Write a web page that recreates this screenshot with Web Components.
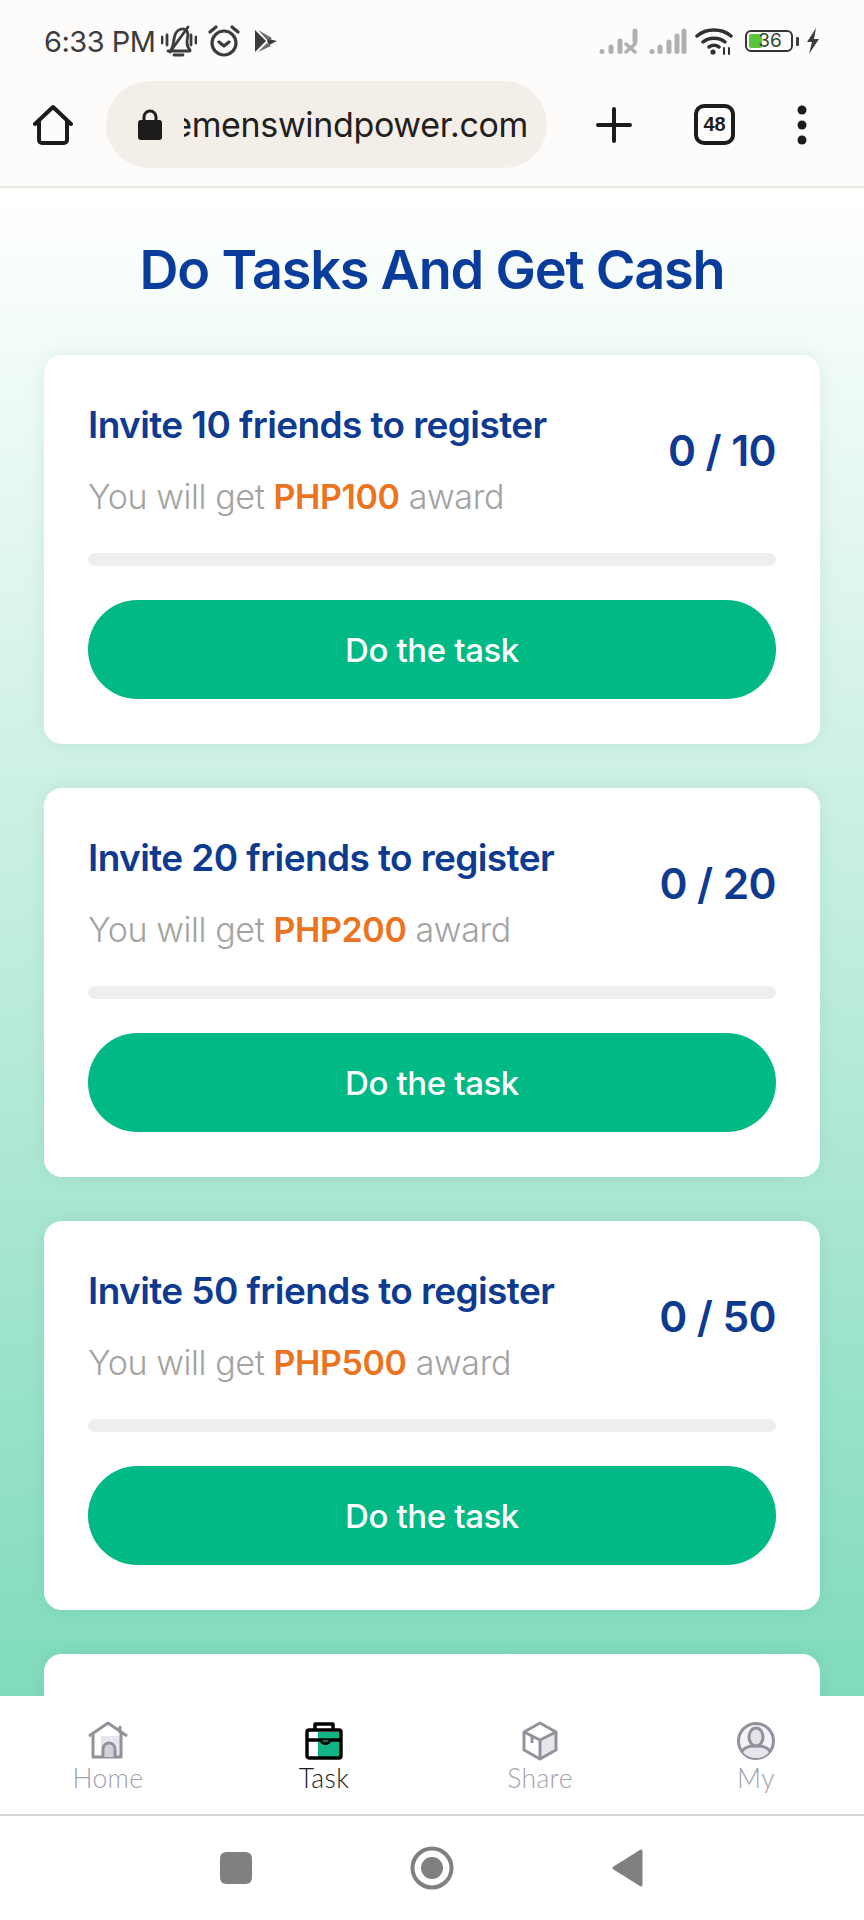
<!DOCTYPE html>
<html lang="en">
<head>
<meta charset="UTF-8">
<title>Do Tasks And Get Cash</title>
<style>
  html, body { height: 1920px; overflow: hidden; }
  body { margin: 0; display: flex; flex-direction: column; font-family: Inter, "Liberation Sans", sans-serif; background: #fff; }
</style>
</head>
<body>
<script>
  const RESET = `* { margin: 0; padding: 0; box-sizing: border-box; } :host { box-sizing: border-box; }`;

  class StatusBar extends HTMLElement {
    constructor() {
      super();
      this.attachShadow({ mode: 'open' });
      this.shadowRoot.innerHTML = `
        <style>
          ${RESET}
          :host { display: flex; align-items: center; height: 75px; padding: 7px 44px 0 44px; background: #fefbfb; color: #3c3c3c; flex: none; }
          .time { font: 400 29px Inter, sans-serif; letter-spacing: -0.5px; }
          svg { display: block; flex: none; }
          .left { display: flex; align-items: center; }
          .right { margin-left: auto; display: flex; align-items: center; }
          .batt { position: relative; width: 48px; height: 22px; border: 2.5px solid #353535; border-radius: 6px; margin-left: 12px; font: 400 19px/17px Inter, sans-serif; text-align: center; padding-left: 2px; overflow: hidden; isolation: isolate; color: #2f4a2c; }
          .batt i { position: absolute; left: 2px; top: 2px; bottom: 2px; width: 13px; background: #5cc43a; border-radius: 2px; z-index: -1; }
        </style>
        <div class="left">
          <span class="time">6:33 PM</span>
          <svg style="margin-left:5px" width="36" height="34" viewBox="0 0 36 34" fill="none" stroke="#3c3c3c" stroke-width="2.800" stroke-linecap="round" stroke-linejoin="round"><path d="M10 26c3-4 2-9 4-15 2-6 9-8 12-4 2 3 0 8 0 11 0 3 1 6 3 8"/><path d="M27 3L9 28M7 27h22M13 31h9"/><path d="M1 13v6M6 11v10M30 11v10M35 13v6"/></svg>
          <svg style="margin-left:10px" width="34" height="32" viewBox="0 0 34 32" fill="none" stroke="#3c3c3c" stroke-width="3.200" stroke-linecap="round" stroke-linejoin="round"><circle cx="17" cy="18" r="12"/><path d="M12 17l5 4 5-4M3 7l6-5M31 7l-6-5"/></svg>
          <svg style="margin-left:13px" width="24" height="24" viewBox="0 0 24 24" fill="#3c3c3c"><path d="M1 1l11 11L1 23z"/><path d="M4 1l14 8-4 3z" opacity=".75"/><path d="M15 10l8 2-8 4-2-4z"/><path d="M4 23l9-9 4 3z" opacity=".75"/></svg>
        </div>
        <div class="right">
          <svg width="40" height="26" viewBox="0 0 40 26" fill="none" stroke="#b0b0b0" stroke-width="5" stroke-linecap="round"><path d="M3 23.500v0M12 19v4.500M21 13v10.500"/><path d="M36 3v10" /><path d="M27 16l9 8M36 16l-9 8" stroke-width="3.500"/></svg>
          <svg width="38" height="26" viewBox="0 0 38 26" fill="none" stroke="#b0b0b0" stroke-width="5" stroke-linecap="round" style="margin-left:10px"><path d="M3 23.500v0M11 19v4.500M20 14v9.500M28 8v15.500M35 3v20.500"/></svg>
          <svg width="38" height="28" viewBox="0 0 38 28" fill="none" stroke="#303030" stroke-width="3.400" stroke-linecap="round" style="margin-left:8px"><path d="M2 9c9-8 25-8 34 0M8 15c6-5 16-5 22 0M14 20c3-2 7-2 10 0"/><circle cx="18" cy="25" r="2.600" fill="#303030" stroke="none"/><path d="M29 21v6M34 21v6" stroke-width="2"/></svg>
          <div class="batt"><i></i>36</div>
          <svg width="4" height="9" viewBox="0 0 4 9" style="margin-left:3px"><rect width="3" height="9" rx="1" fill="#3c3c3c"/></svg>
          <svg width="15" height="26" viewBox="0 0 15 26" fill="#3c3c3c" style="margin-left:5px"><path d="M11 0L2 14h5l-3 12 10-15H9z"/></svg>
        </div>`;
    }
  }

  class BrowserToolbar extends HTMLElement {
    constructor() {
      super();
      this.attachShadow({ mode: 'open' });
      this.shadowRoot.innerHTML = `
        <style>
          ${RESET}
          :host { display: flex; align-items: center; height: 113px; padding: 0 0 12px 33px; background: #fefbfb; border-bottom: 2px solid #e9e7df; color: #1e1c1a; flex: none; }
          svg { display: block; flex: none; }
          .pill { display: flex; align-items: center; width: 441px; height: 87px; margin-left: 33px; padding: 0 19px 0 32px; background: #f3eee8; border-radius: 44px; flex: none; }
          .url { flex: 1; min-width: 0; margin-left: 22px; overflow: hidden; display: flex; justify-content: flex-end; white-space: nowrap; font: 400 34px Inter, sans-serif; letter-spacing: -0.35px; color: #22201e; }
          .url span { flex: none; }
          .plus { margin-left: 49px; }
          .tabs { flex: none; width: 41px; height: 41px; margin-left: 62px; border: 4px solid #1e1c1a; border-radius: 10px; display: flex; align-items: center; justify-content: center; font: 700 20px "Liberation Sans Narrow", "Liberation Sans", sans-serif; }
          .dots { margin-left: 62px; }
        </style>
        <svg width="40" height="42" viewBox="0 0 40 42" fill="none" stroke="#1e1c1a" stroke-width="4" stroke-linejoin="round" stroke-linecap="round"><path d="M2 20L20 3l18 17M6 17v19a3 3 0 0 0 3 3h22a3 3 0 0 0 3-3V17"/></svg>
        <div class="pill">
          <svg width="24" height="31" viewBox="0 0 24 31" fill="#1e1c1a"><path d="M6 13V8a6 6 0 0 1 12 0v5" fill="none" stroke="#1e1c1a" stroke-width="3"/><rect y="11" width="24" height="20" rx="3"/></svg>
          <div class="url"><span>emenswindpower.com</span></div>
        </div>
        <svg class="plus" width="36" height="36" viewBox="0 0 36 36" stroke="#1e1c1a" stroke-width="4" stroke-linecap="round"><path d="M18 2v32M2 18h32"/></svg>
        <div class="tabs">48</div>
        <svg class="dots" width="10" height="40" viewBox="0 0 10 40" fill="#1e1c1a"><circle cx="5" cy="5" r="4.500"/><circle cx="5" cy="20" r="4.500"/><circle cx="5" cy="35" r="4.500"/></svg>`;
    }
  }

  class TaskCard extends HTMLElement {
    constructor() {
      super();
      this.attachShadow({ mode: 'open' });
    }

    connectedCallback() {
      const friends = this.getAttribute('friends');
      const award = this.getAttribute('award');
      const style = `
        <style>
          ${RESET}
          :host { display: block; flex: none; height: 389px; padding: 44px; background: #fff; border-radius: 18px; box-shadow: 0 0 18px rgba(0, 110, 80, .09); }
          .top { display: flex; justify-content: space-between; align-items: center; height: 118px; padding-top: 5px; }
          h3 { font: 600 37px/46px Inter, sans-serif; letter-spacing: -0.6px; color: #0e3b8f; white-space: nowrap; }
          p { margin-top: 27px; font: 300 34px/44px Inter, sans-serif; letter-spacing: -0.4px; color: #a3a3a3; white-space: nowrap; }
          b { font-weight: 600; color: #ec741f; }
          .count { margin-bottom: 20px; font: 600 42.500px/50px Inter, sans-serif; letter-spacing: -0.6px; color: #0e3b8f; white-space: nowrap; }
          .bar { height: 13px; margin-top: 36px; background: #eeeeee; border-radius: 7px; }
          .btn { display: flex; align-items: center; justify-content: center; height: 99px; margin-top: 34px; border-radius: 50px; background: #00b984; color: #fff; font: 500 33px Inter, sans-serif; letter-spacing: -0.4px; }
        </style>`;
      // last card sits under the tab bar, only its top edge shows
      if (!friends) {
        this.shadowRoot.innerHTML = style;
        return;
      }
      this.shadowRoot.innerHTML = style + `
        <div class="top">
          <div>
            <h3>Invite ${friends} friends to register</h3>
            <p>You will get <b>PHP${award}</b> award</p>
          </div>
          <div class="count">0 / ${friends}</div>
        </div>
        <div class="bar"></div>
        <div class="btn">Do the task</div>`;
    }
  }

  class TaskPage extends HTMLElement {
    constructor() {
      super();
      this.attachShadow({ mode: 'open' });
      this.shadowRoot.innerHTML = `
        <style>
          ${RESET}
          :host { display: block; flex: 1; min-height: 0; overflow: hidden; padding: 0 44px; background: linear-gradient(#ffffff 0%, #80dbbd 100%); }
          h1 { height: 167px; padding-top: 50px; text-align: center; font: 600 54px/64px Inter, sans-serif; letter-spacing: -1.2px; color: #0a3c9c; white-space: nowrap; }
          .list { display: flex; flex-direction: column; gap: 44px; }
        </style>
        <h1>Do Tasks And Get Cash</h1>
        <div class="list"><slot></slot></div>`;
    }
  }

  class TabItem extends HTMLElement {
    constructor() {
      super();
      this.attachShadow({ mode: 'open' });
      this.shadowRoot.innerHTML = `
        <style>
          ${RESET}
          :host { display: flex; flex-direction: column; align-items: center; flex: 1; color: #a2a2aa; font: 300 26.500px/30px Lato, sans-serif; letter-spacing: .4px; }
          :host([active]) { color: #1b1b1b; }
          ::slotted(svg) { display: block; width: 38px; height: 38px; overflow: visible; }
          .label { margin-top: 3px; }
        </style>
        <slot name="icon"></slot>
        <div class="label"><slot></slot></div>`;
    }
  }

  class TabBar extends HTMLElement {
    constructor() {
      super();
      this.attachShadow({ mode: 'open' });
      this.shadowRoot.innerHTML = `
        <style>
          ${RESET}
          :host { display: flex; flex: none; height: 120px; padding-top: 26px; background: #fff; border-bottom: 2px solid #d4d4d4; }
        </style>
        <slot></slot>`;
    }
  }

  class SystemNav extends HTMLElement {
    constructor() {
      super();
      this.attachShadow({ mode: 'open' });
      this.shadowRoot.innerHTML = `
        <style>
          ${RESET}
          :host { display: flex; flex: none; height: 104px; align-items: center; justify-content: center; background: #fff; }
          .sq { width: 32px; height: 32px; border-radius: 6px; background: #808080; }
          svg { display: block; }
          .c { margin-left: 158px; }
          .t { margin-left: 158px; }
        </style>
        <div class="sq"></div>
        <svg class="c" width="44" height="44" viewBox="0 0 44 44"><circle cx="22" cy="22" r="19.500" fill="none" stroke="#808080" stroke-width="4"/><circle cx="22" cy="22" r="11" fill="#808080"/></svg>
        <svg class="t" width="32" height="38" viewBox="0 0 32 38"><path d="M29 2L2 19l27 17z" fill="#808080" stroke="#808080" stroke-width="3" stroke-linejoin="round"/></svg>`;
    }
  }

  customElements.define('status-bar', StatusBar);
  customElements.define('browser-toolbar', BrowserToolbar);
  customElements.define('task-card', TaskCard);
  customElements.define('task-page', TaskPage);
  customElements.define('tab-item', TabItem);
  customElements.define('tab-bar', TabBar);
  customElements.define('system-nav', SystemNav);
</script>

<status-bar></status-bar>
<browser-toolbar></browser-toolbar>
<task-page>
  <task-card friends="10" award="100"></task-card>
  <task-card friends="20" award="200"></task-card>
  <task-card friends="50" award="500"></task-card>
  <task-card></task-card>
</task-page>
<tab-bar>
  <tab-item>
    <svg slot="icon" viewBox="0 0 38 38" fill="none" stroke="#92929c" stroke-width="3" stroke-linejoin="round"><path d="M12 14h20v21H12z" fill="#e6e6ee" stroke="none"/><path d="M0 14L19 1l19 13M4 11v24h28V11M31 4v7"/><path d="M14 35V27a6 6 0 0 1 12 0v8" fill="#d2d2d8"/></svg>
    Home
  </tab-item>
  <tab-item active>
    <svg slot="icon" viewBox="0 0 38 38" fill="none" stroke="#000" stroke-width="3.400" stroke-linejoin="round"><rect x="13" y="10" width="23" height="25" fill="#12b384" stroke="none"/><rect x="2" y="8" width="34" height="28" rx="2"/><path d="M10 8V2h18v6M2 18h34"/><path d="M16 18c0 5 9 5 9 0" fill="#0a6b50" stroke-width="2.500"/></svg>
    Task
  </tab-item>
  <tab-item>
    <svg slot="icon" viewBox="0 0 38 38" fill="none" stroke="#92929c" stroke-width="3" stroke-linejoin="round"><path d="M19 18l16-8v18l-16 9z" fill="#e6e6ec" stroke="none"/><path d="M19 1l16 9v18l-16 9-16-9V10z"/><path d="M3 10l16 8 16-8M19 18v19M11 14v7"/></svg>
    Share
  </tab-item>
  <tab-item>
    <svg slot="icon" viewBox="0 0 38 38" fill="none" stroke="#92929c" stroke-width="3"><circle cx="19" cy="19" r="17.500" fill="#f3f3f7"/><path d="M6 30c4-5 8-6 13-6s9 1 13 6c-3 4-8 6-13 6s-10-2-13-6z" fill="#e6e6ec" stroke="none"/><ellipse cx="19" cy="15" rx="7" ry="9" fill="#e2e2e8"/><path d="M5 29c4-5 9-5 14-5s10 0 14 5"/></svg>
    My
  </tab-item>
</tab-bar>
<system-nav></system-nav>
</body>
</html>
